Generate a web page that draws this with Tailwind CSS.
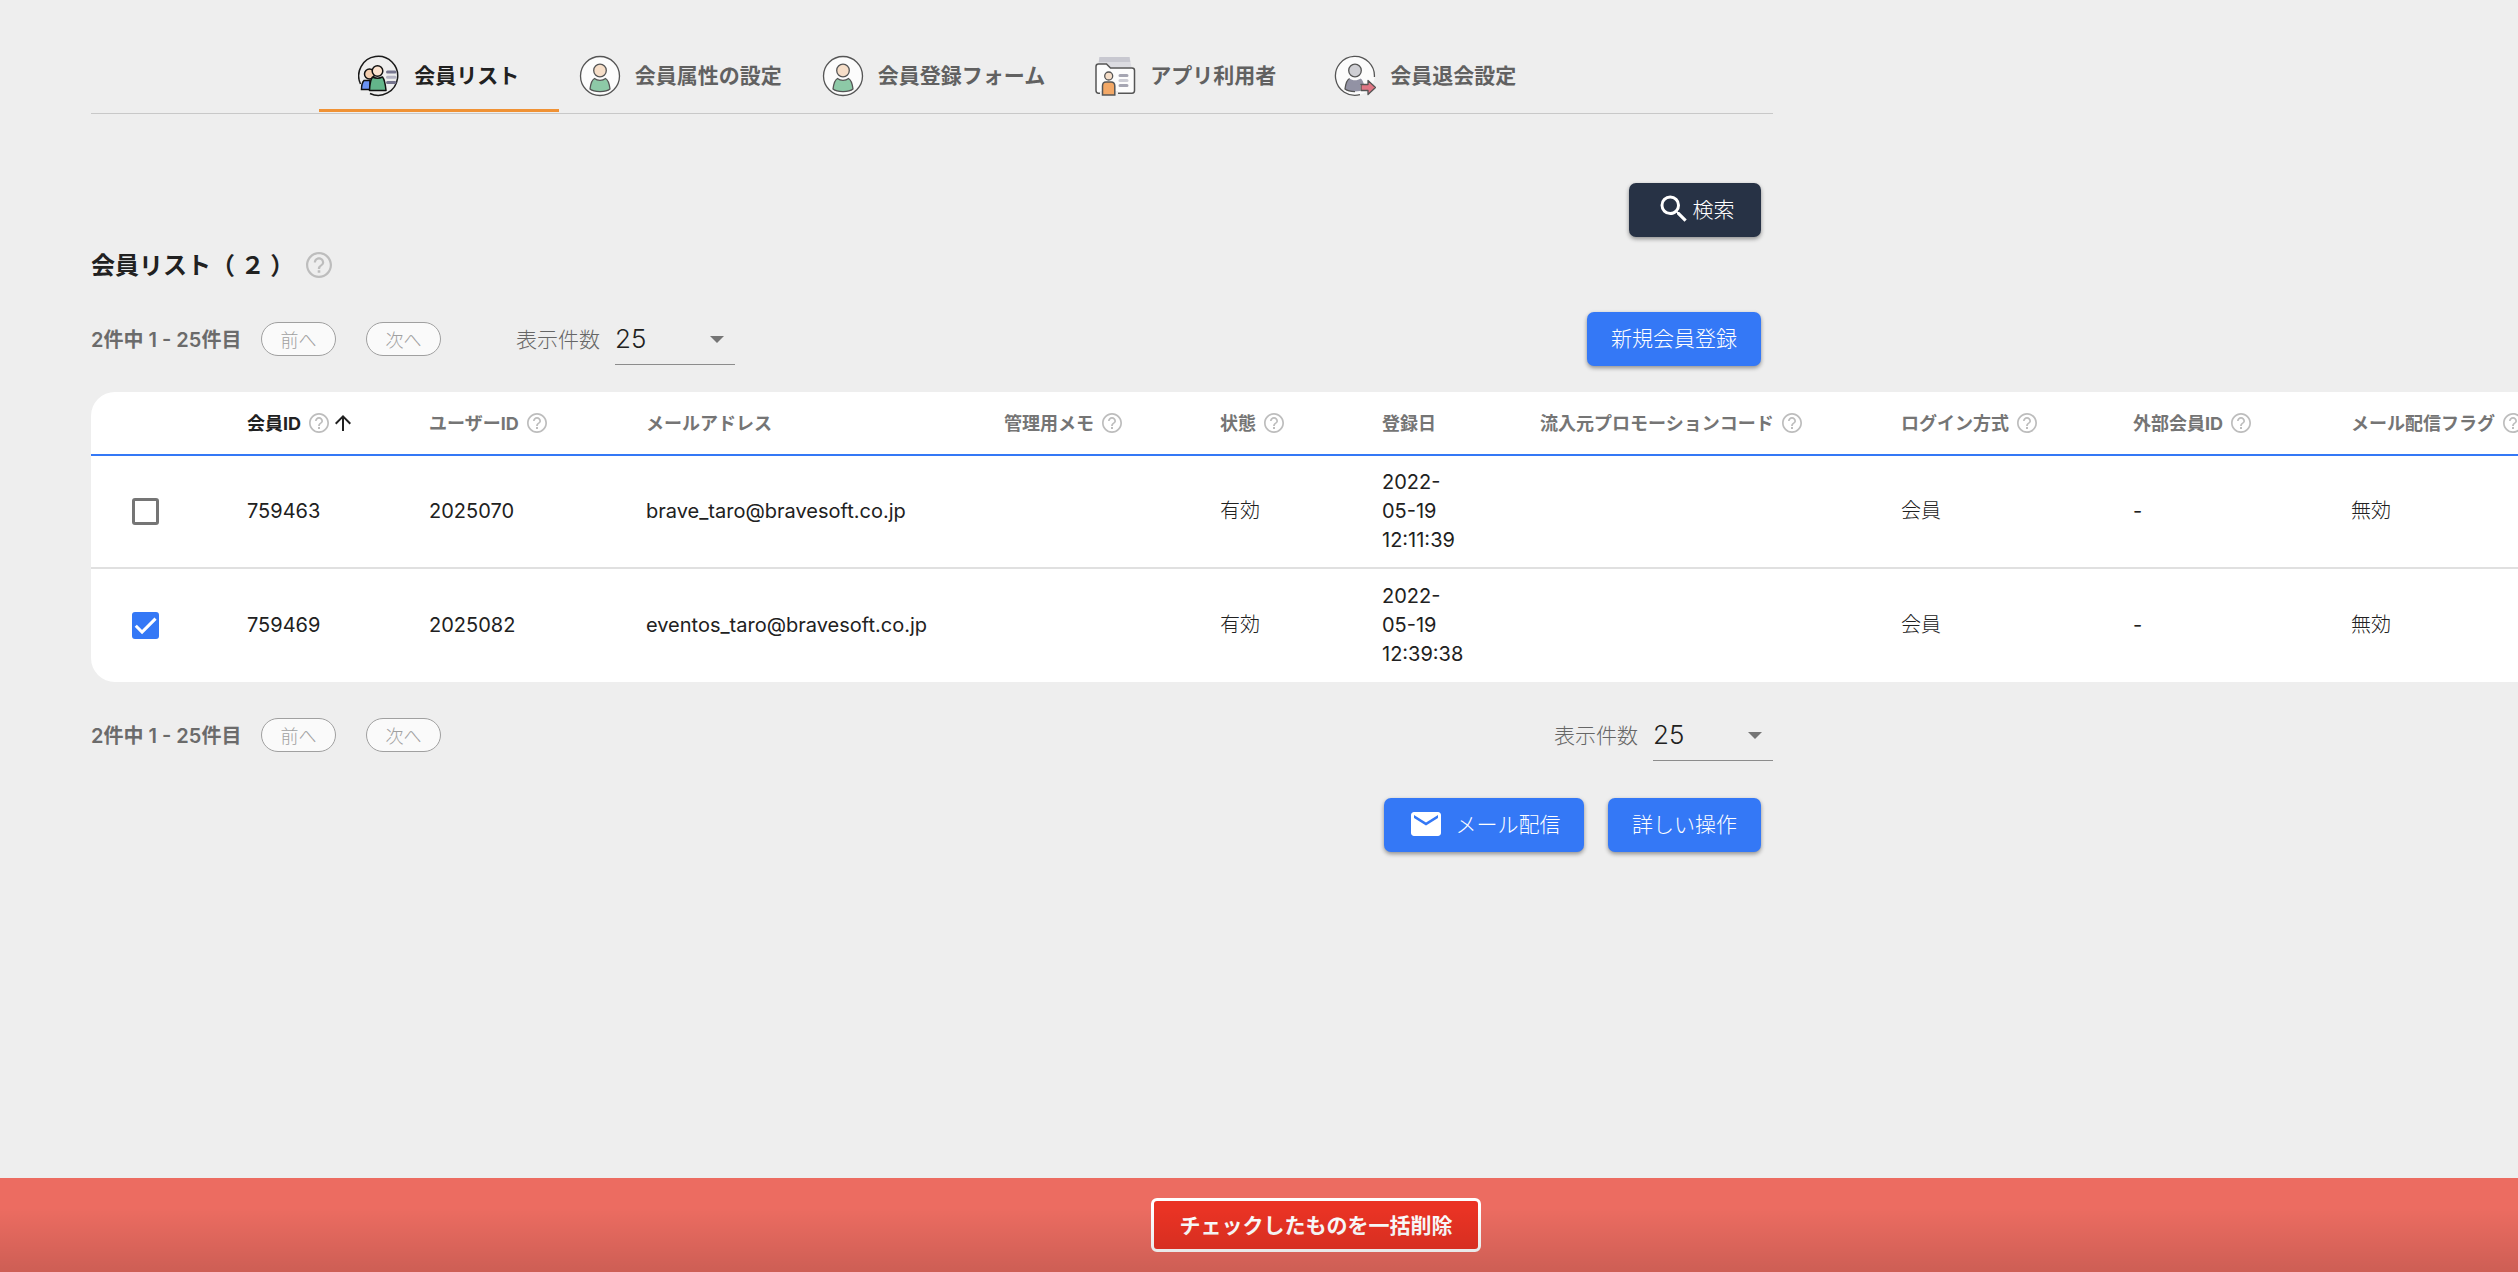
<!DOCTYPE html>
<html lang="ja">
<head>
  <meta charset="UTF-8" />
  <meta name="viewport" content="width=device-width, initial-scale=1" />
  <title>会員リスト</title>
  <script src="https://cdn.jsdelivr.net/npm/@tailwindcss/browser@4"></script>
</head>
<body class="min-h-screen overflow-x-hidden bg-[#eeeeee] font-['Inter','Noto_Sans_CJK_JP',sans-serif] text-[20px] leading-[29px] text-[#212121] flex flex-col">

  <!-- Shared icons -->
  <svg class="hidden" aria-hidden="true">
    <symbol id="help" viewBox="2 2 20 20">
      <path fill="currentColor" d="M11 18h2v-2h-2v2zm1-16C6.48 2 2 6.48 2 12s4.48 10 10 10 10-4.48 10-10S17.52 2 12 2zm0 18.300c-4.500 0-8.300-3.800-8.300-8.300s3.800-8.300 8.300-8.300 8.300 3.800 8.300 8.300-3.800 8.300-8.300 8.300zm0-14.300c-2.210 0-4 1.790-4 4h1.700c0-1.300 1-2.300 2.300-2.300s2.300 1 2.300 2.300c0 2-3.200 1.750-3.200 5h1.800c0-2.250 3.100-2.500 3.100-5 0-2.210-1.790-4-4-4z" />
    </symbol>
    <symbol id="member" viewBox="0 0 42 42">
      <circle cx="21" cy="21" r="19.500" fill="#fcfcfc" stroke="#555" stroke-width="1.300" />
      <path d="M15.500 23.500c3 2.400 8 2.400 11 0 3 1.500 4 6.500 4.500 10.500-4 3.500-16 3.500-20 0 .5-4 1.500-9 4.500-10.500z" fill="#8dc9a7" stroke="#555" stroke-width="1.300" stroke-linejoin="round" />
      <circle cx="21" cy="15.500" r="6.300" fill="#f6dec8" stroke="#555" stroke-width="1.300" />
    </symbol>
    <symbol id="caret" viewBox="0 0 14 7">
      <path fill="#757575" d="M0 0h14L7 7z" />
    </symbol>
  </svg>

  <nav class="ml-[91px] w-[67%] max-w-[1682px] border-b border-[#c8c8c8] pt-10 pb-px flex justify-center text-[21px] font-bold text-[#616161]">
    <a href="#" class="h-[72px] min-w-60 px-5 pt-0.5 border-b-3 border-[#f09235] text-[#212121] flex items-center justify-center gap-3.5" aria-current="page">
      <svg class="size-[42px]" viewBox="0 0 42 42">
        <path d="M2.500 29A19.500 19.500 0 1 1 12 38.500" fill="none" stroke="#1a1a1a" stroke-width="1.500" />
        <path d="M6 25.500h6v9H3.500c0-4 .5-7 2.500-9z" fill="#6a93f3" stroke="#111" stroke-width="1.500" />
        <circle cx="11.500" cy="19" r="5" fill="#f5cfb0" stroke="#111" stroke-width="1.500" />
        <path d="M14.500 22c3 1.500 7 1.500 10 0 2.500 3 3 8.500 3.500 13.500H11.500c.2-5 .8-10.500 3-13.500z" fill="#63b58a" stroke="#111" stroke-width="1.500" stroke-linejoin="round" />
        <circle cx="19.500" cy="16" r="5.300" fill="#fbe3d0" stroke="#111" stroke-width="1.500" />
        <path d="M29.500 17h7.500M29.500 27.500h7.500" stroke="#77768f" stroke-width="3" stroke-linecap="round" />
        <path d="M29.500 22.200h7.500" stroke="#b4b3c2" stroke-width="3" stroke-linecap="round" />
      </svg>
      会員リスト
    </a>
    <a href="#" class="h-[72px] min-w-60 px-5 pt-0.5 border-b-3 border-transparent flex items-center justify-center gap-3.5">
      <svg class="size-[42px]"><use href="#member" /></svg>
      会員属性の設定
    </a>
    <a href="#" class="h-[72px] min-w-60 px-5 pt-0.5 border-b-3 border-transparent flex items-center justify-center gap-3.5">
      <svg class="size-[42px]"><use href="#member" /></svg>
      会員登録フォーム
    </a>
    <a href="#" class="h-[72px] min-w-60 px-5 pt-0.5 border-b-3 border-transparent flex items-center justify-center gap-3.5">
      <svg class="size-[42px]" viewBox="0 0 42 42">
        <path d="M5.500 2h30l2 10H4z" fill="#dcdce1" />
        <path d="M5.500 2h30l.8 5H4.700z" fill="#c8c8d0" />
        <path d="M2 11.500C2 9.500 3 9 4.500 9h8l4 4H38c1.500 0 2.500.8 2.500 2.500v20c0 1.800-1 2.700-2.500 2.700H4.500C3 38.200 2 37.300 2 35.500z" fill="#fcfcfc" stroke="#555" stroke-width="1.500" />
        <path d="M6 36h18v6H6z" fill="#eeeeee" />
        <path d="M8.500 40V31c0-3 2-4 3.500-4h5c2 0 3.800 1.500 3.800 4v9z" fill="#f3a866" stroke="#555" stroke-width="1.500" />
        <circle cx="14.700" cy="21" r="4" fill="#f6dec8" stroke="#555" stroke-width="1.300" />
        <path d="M26 20.500h7M26 30.500h7" stroke="#a5a5b2" stroke-width="3" stroke-linecap="round" />
        <path d="M26 25.500h7" stroke="#cdcdd5" stroke-width="3" stroke-linecap="round" />
      </svg>
      アプリ利用者
    </a>
    <a href="#" class="h-[72px] min-w-60 px-5 pt-0.5 border-b-3 border-transparent flex items-center justify-center gap-3.5">
      <svg class="size-[42px]" viewBox="0 0 42 42">
        <circle cx="21" cy="21" r="19.500" fill="#fcfcfc" />
        <path d="M26 39.700A19.500 19.500 0 1 1 40.400 22" fill="none" stroke="#555" stroke-width="1.300" />
        <path d="M15.500 23.500c3 2.400 8 2.400 11 0 2 1 3 4 3.500 6.500h-4v6c-5 1-12 .5-15-2 .5-4 1.500-9 4.500-10.500z" fill="#9292a4" />
        <path d="M15.500 23.500c-3 1.500-4 6.500-4.500 10.500 2.500 2 6.500 2.600 10 2.600" fill="none" stroke="#555" stroke-width="1.300" />
        <circle cx="21" cy="15.500" r="6.300" fill="#cfcfd4" stroke="#555" stroke-width="1.300" />
        <path d="M27 29.500h7v-4l7.500 7-7.500 7v-4h-7z" fill="#e07684" stroke="#555" stroke-width="1.300" stroke-linejoin="round" />
      </svg>
      会員退会設定
    </a>
  </nav>

  <main class="ml-[91px] flex-1 font-light">
    <div class="w-[70%] max-w-[1682px]">
      <div class="pt-[69px] pr-3 flex justify-end">
        <button class="h-[54px] w-[132px] rounded-[7px] bg-[#273245] pb-0.5 text-[21px] text-white shadow-[0_2px_4px_rgb(0_0_0/0.4)] flex items-center justify-center gap-px">
          <svg class="size-9" viewBox="0 0 24 24" fill="currentColor"><path d="M15.500 14h-.79l-.28-.27A6.470 6.470 0 0 0 16 9.500 6.500 6.500 0 1 0 9.500 16c1.610 0 3.090-.59 4.230-1.570l.27.28v.79l5 4.990L20.490 19l-4.990-5zm-6 0C7.010 14 5 11.990 5 9.500S7.010 5 9.500 5 14 7.010 14 9.500 11.990 14 9.500 14z" /></svg>
          検索
        </button>
      </div>

      <div class="mt-3 h-8 flex items-center gap-3">
        <h1 class="text-[24px] font-bold">会員リスト（ ２ ）</h1>
        <button aria-label="ヘルプ" class="text-[#bdbdbd]"><svg class="size-[26px]"><use href="#help" /></svg></button>
      </div>

      <div class="mt-[31px] h-[54px] pr-3 flex items-center">
        <p class="w-[170px] pt-0.5 text-[20px] font-semibold text-[#6b6b6b]">2件中 1 - 25件目</p>
        <button disabled class="h-[34px] w-[75px] rounded-full border border-[#a0a0a0] bg-[#fafafa] pt-0.5 text-[18px] text-[#a0a0a0]">前へ</button>
        <button disabled class="ml-[30px] h-[34px] w-[75px] rounded-full border border-[#a0a0a0] bg-[#fafafa] pt-0.5 text-[18px] text-[#a0a0a0]">次へ</button>
        <label for="per-page-top" class="ml-[75px] text-[21px] text-[#666666]">表示件数</label>
        <div class="ml-[15px] grid w-[120px] items-center">
          <select id="per-page-top" class="col-start-1 row-start-1 h-[52px] appearance-none border-b border-[#8c8c8c] text-[26px]">
            <option>25</option>
            <option>50</option>
            <option>100</option>
          </select>
          <svg class="pointer-events-none col-start-1 row-start-1 mr-[11px] h-[7px] w-3.5 justify-self-end"><use href="#caret" /></svg>
        </div>
        <button class="ml-auto h-[54px] w-[174px] rounded-[7px] bg-[#3478f6] pb-0.5 text-[21px] text-white shadow-[0_2px_4px_rgb(0_0_0/0.4)]">新規会員登録</button>
      </div>
    </div>

    <div class="mt-[26px] w-max overflow-hidden rounded-3xl bg-white">
      <table class="w-[2484px] table-fixed text-left font-normal">
        <colgroup>
          <col class="w-[156px]" />
          <col class="w-[182px]" />
          <col class="w-[217px]" />
          <col class="w-[358px]" />
          <col class="w-[216px]" />
          <col class="w-[162px]" />
          <col class="w-[158px]" />
          <col class="w-[361px]" />
          <col class="w-[232px]" />
          <col class="w-[218px]" />
          <col class="w-[224px]" />
        </colgroup>
        <thead>
          <tr class="h-[63px] border-b-2 border-[#3478f6] text-[18px] whitespace-nowrap text-[#757575]">
            <td></td>
            <th class="text-[#212121]">
              <span class="flex items-center gap-1.5">会員ID
                <svg class="ml-0.5 size-5 text-[#bdbdbd]"><use href="#help" /></svg>
                <svg class="size-4" viewBox="4 4 16 16" fill="currentColor"><path d="M4 12l1.410 1.410L11 7.830V20h2V7.830l5.580 5.590L20 12l-8-8-8 8z" /></svg>
              </span>
            </th>
            <th><span class="flex items-center gap-2">ユーザーID <svg class="size-5 text-[#bdbdbd]"><use href="#help" /></svg></span></th>
            <th>メールアドレス</th>
            <th><span class="flex items-center gap-2">管理用メモ <svg class="size-5 text-[#bdbdbd]"><use href="#help" /></svg></span></th>
            <th><span class="flex items-center gap-2">状態 <svg class="size-5 text-[#bdbdbd]"><use href="#help" /></svg></span></th>
            <th>登録日</th>
            <th><span class="flex items-center gap-2">流入元プロモーションコード <svg class="size-5 text-[#bdbdbd]"><use href="#help" /></svg></span></th>
            <th><span class="flex items-center gap-2">ログイン方式 <svg class="size-5 text-[#bdbdbd]"><use href="#help" /></svg></span></th>
            <th><span class="flex items-center gap-2">外部会員ID <svg class="size-5 text-[#bdbdbd]"><use href="#help" /></svg></span></th>
            <th><span class="flex items-center gap-2">メール配信フラグ <svg class="size-5 text-[#bdbdbd]"><use href="#help" /></svg></span></th>
          </tr>
        </thead>
        <tbody>
          <tr class="border-b-2 border-[#e0e0e0]">
            <td class="pl-[41px]">
              <label class="grid size-[27px]">
                <input type="checkbox" aria-label="759463" class="peer col-start-1 row-start-1 appearance-none rounded-[3px] border-3 border-[#757575] checked:border-[#3478f6] checked:bg-[#3478f6]" />
                <svg class="pointer-events-none invisible col-start-1 row-start-1 peer-checked:visible" viewBox="3 3 18 18"><path d="M5.500 12.200l4.200 4.200L18.700 7.400" fill="none" stroke="#fff" stroke-width="2" /></svg>
              </label>
            </td>
            <td>759463</td>
            <td>2025070</td>
            <td>brave_taro@bravesoft.co.jp</td>
            <td></td>
            <td class="font-light">有効</td>
            <td class="py-3 pr-[72px]">2022-05-19 12:11:39</td>
            <td></td>
            <td class="font-light">会員</td>
            <td>-</td>
            <td class="font-light">無効</td>
          </tr>
          <tr class="h-[114px]">
            <td class="pl-[41px]">
              <label class="grid size-[27px]">
                <input type="checkbox" checked aria-label="759469" class="peer col-start-1 row-start-1 appearance-none rounded-[3px] border-3 border-[#757575] checked:border-[#3478f6] checked:bg-[#3478f6]" />
                <svg class="pointer-events-none invisible col-start-1 row-start-1 peer-checked:visible" viewBox="3 3 18 18"><path d="M5.500 12.200l4.200 4.200L18.700 7.400" fill="none" stroke="#fff" stroke-width="2" /></svg>
              </label>
            </td>
            <td>759469</td>
            <td>2025082</td>
            <td>eventos_taro@bravesoft.co.jp</td>
            <td></td>
            <td class="font-light">有効</td>
            <td class="py-3 pr-[72px]">2022-05-19 12:39:38</td>
            <td></td>
            <td class="font-light">会員</td>
            <td>-</td>
            <td class="font-light">無効</td>
          </tr>
        </tbody>
      </table>
    </div>

    <div class="w-[70%] max-w-[1682px]">
      <div class="mt-[26px] h-[54px] flex items-center">
        <p class="w-[170px] pt-0.5 text-[20px] font-semibold text-[#6b6b6b]">2件中 1 - 25件目</p>
        <button disabled class="h-[34px] w-[75px] rounded-full border border-[#a0a0a0] bg-[#fafafa] pt-0.5 text-[18px] text-[#a0a0a0]">前へ</button>
        <button disabled class="ml-[30px] h-[34px] w-[75px] rounded-full border border-[#a0a0a0] bg-[#fafafa] pt-0.5 text-[18px] text-[#a0a0a0]">次へ</button>
        <label for="per-page-bottom" class="ml-auto text-[21px] text-[#666666]">表示件数</label>
        <div class="ml-[15px] grid w-[120px] items-center">
          <select id="per-page-bottom" class="col-start-1 row-start-1 h-[52px] appearance-none border-b border-[#8c8c8c] text-[26px]">
            <option>25</option>
            <option>50</option>
            <option>100</option>
          </select>
          <svg class="pointer-events-none col-start-1 row-start-1 mr-[11px] h-[7px] w-3.5 justify-self-end"><use href="#caret" /></svg>
        </div>
      </div>

      <div class="mt-9 pr-3 flex justify-end gap-6">
        <button class="h-[54px] w-[200px] rounded-[7px] bg-[#3478f6] pb-0.5 text-[21px] text-white shadow-[0_2px_4px_rgb(0_0_0/0.4)] flex items-center justify-center gap-3">
          <svg class="size-9" viewBox="0 0 24 24" fill="currentColor"><path d="M20 4H4c-1.100 0-1.990.9-1.990 2L2 18c0 1.100.9 2 2 2h16c1.100 0 2-.9 2-2V6c0-1.100-.9-2-2-2zm0 4l-8 5-8-5V6l8 5 8-5v2z" /></svg>
          メール配信
        </button>
        <button class="h-[54px] w-[153px] rounded-[7px] bg-[#3478f6] pb-0.5 text-[21px] text-white shadow-[0_2px_4px_rgb(0_0_0/0.4)]">詳しい操作</button>
      </div>
    </div>
  </main>

  <footer class="relative h-[94px] bg-[#ec6c61] pl-[114px] flex items-center justify-center">
    <button class="h-[54px] w-[330px] rounded-[6px] border-3 border-white bg-[#ea3324] text-[21px] font-bold text-white">チェックしたものを一括削除</button>
    <div class="pointer-events-none absolute inset-x-0 bottom-0 h-16 bg-linear-to-b from-transparent to-black/13"></div>
  </footer>

</body>
</html>
